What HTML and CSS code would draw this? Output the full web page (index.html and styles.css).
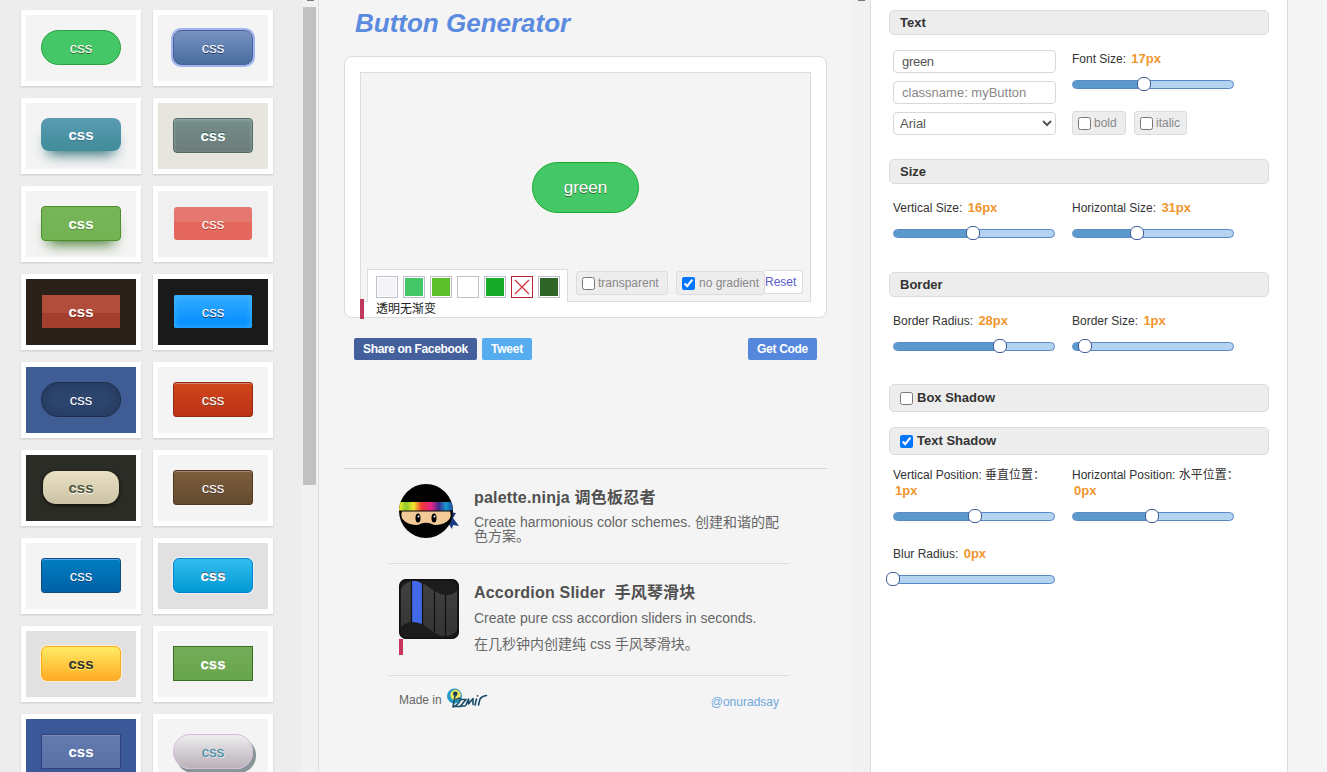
FILE: index.html
```
<!DOCTYPE html>
<html lang="zh">
<head>
<meta charset="utf-8">
<title>Button Generator</title>
<link rel="stylesheet" href="styles.css">
</head>
<body>
<aside class="gallery">
  <div class="cards">
    <div class="card"><div class="stage"><span class="btn b-green">css</span></div></div>
    <div class="card"><div class="stage"><span class="btn b-indigo">css</span></div></div>
    <div class="card"><div class="stage"><span class="btn bold flat b-teal">css</span></div></div>
    <div class="card"><div class="stage s-stone"><span class="btn bold b-slate">css</span></div></div>
    <div class="card"><div class="stage"><span class="btn bold b-grass">css</span></div></div>
    <div class="card"><div class="stage s-pale"><span class="btn small b-coral">css</span></div></div>
    <div class="card"><div class="stage s-coffee"><span class="btn bold small b-brick">css</span></div></div>
    <div class="card"><div class="stage s-black"><span class="btn small b-azure">css</span></div></div>
    <div class="card"><div class="stage s-blue"><span class="btn b-navy">css</span></div></div>
    <div class="card"><div class="stage"><span class="btn b-orange">css</span></div></div>
    <div class="card"><div class="stage s-moss"><span class="btn bold small b-cream">css</span></div></div>
    <div class="card"><div class="stage"><span class="btn b-brown">css</span></div></div>
    <div class="card"><div class="stage"><span class="btn b-royal">css</span></div></div>
    <div class="card"><div class="stage s-grey"><span class="btn bold b-sky">css</span></div></div>
    <div class="card"><div class="stage s-grey"><span class="btn bold b-yellow">css</span></div></div>
    <div class="card"><div class="stage"><span class="btn bold b-leaf">css</span></div></div>
    <div class="card"><div class="stage s-fb"><span class="btn bold b-denim">css</span></div></div>
    <div class="card"><div class="stage"><span class="btn b-silver">css</span></div></div>
  </div>
  <div class="scroll"><div class="arrow"></div><div class="thumb"></div></div>
</aside>

<main class="center">
  <h1>Button Generator</h1>
  <section class="preview">
    <div class="canvas">
      <div class="show"><span class="result">green</span></div>
      <div class="tools">
        <div class="swatches">
          <i class="sw c1"></i><i class="sw c2"></i><i class="sw c3"></i><i class="sw c4"></i><i class="sw c5"></i>
          <svg class="sw-none" viewBox="0 0 22 22"><rect x=".5" y=".5" width="21" height="21" fill="#fff" stroke="#b8222e"/><path d="M4 4L18 18M18 4L4 18" stroke="#d03540" stroke-width="1.3"/></svg>
          <i class="sw c6"></i>
        </div>
        <label class="chip t-transparent"><input type="checkbox">transparent</label>
        <label class="chip t-gradient"><input type="checkbox" checked>no gradient</label>
        <span class="reset">Reset</span>
      </div>
    </div>
    <div class="note">透明无渐变</div>
  </section>
  <div class="share">
    <span class="pill facebook">Share on Facebook</span>
    <span class="pill tweet">Tweet</span>
    <span class="pill code">Get Code</span>
  </div>
  <footer class="foot">
    <article class="promo first">
      <svg class="ninja" viewBox="0 0 60 54">
        <defs>
          <linearGradient id="rainbow"><stop offset="0" stop-color="#f6ef1c"/><stop offset=".13" stop-color="#8cc830"/><stop offset=".27" stop-color="#f7e52a"/><stop offset=".42" stop-color="#ef3a33"/><stop offset=".6" stop-color="#e5238a"/><stop offset=".74" stop-color="#3c2b8c"/><stop offset=".87" stop-color="#159bd2"/><stop offset="1" stop-color="#234696"/></linearGradient>
          <clipPath id="head"><circle cx="27" cy="27" r="27"/></clipPath>
        </defs>
        <path d="M50 28L57 29L54 34L60 42L54 41L53 45L47 36Z" fill="#17397e"/>
        <circle cx="27" cy="27" r="27" fill="#020203"/>
        <g clip-path="url(#head)">
          <rect y="18" width="54" height="8.500" fill="url(#rainbow)"/>
          <path d="M3 27.500H51Q54 36 43 40Q35 42 33 40Q27 37.500 21 40Q19 42 11 40Q0 36 3 27.500Z" fill="#f2ca97"/>
        </g>
        <ellipse cx="19" cy="34" rx="2.500" ry="4.500"/><ellipse cx="35" cy="34" rx="2.500" ry="4.500"/>
        <circle cx="19.500" cy="32.500" r="1" fill="#fff"/><circle cx="35.500" cy="32.500" r="1" fill="#fff"/>
      </svg>
      <div class="copy">
        <h2>palette.ninja 调色板忍者</h2>
        <p>Create harmonious color schemes. 创建和谐的配色方案。</p>
      </div>
    </article>
    <article class="promo second">
      <div class="slider-logo">
        <svg viewBox="0 0 60 60">
          <defs>
            <linearGradient id="fold" x2="0" y2="1"><stop stop-color="#414141"/><stop offset="1" stop-color="#343434"/></linearGradient>
            <clipPath id="tile"><rect width="60" height="60" rx="7"/></clipPath>
          </defs>
          <g clip-path="url(#tile)">
            <rect width="60" height="60" fill="#1c1c1d"/>
            <path d="M2 10Q8 1 16 2C28 3 34 15 47 16Q54 16 58 12V51Q53 57 46 57C34 57 26 43 15 43Q7 43 2 48Z" fill="url(#fold)"/>
            <path d="M13 2Q18 1 23 5V45Q18 43 13 43Z" fill="#4169e8"/>
            <path d="M12.5 1V44M23.5 4V46M35.500 11V53M46.500 15V58" stroke="#111" stroke-width="1.200"/>
            <rect x=".75" y=".75" width="58.500" height="58.500" rx="7" fill="none" stroke="#111" stroke-width="1.500"/>
          </g>
        </svg>
        <div class="mark"></div>
      </div>
      <div class="copy">
        <h2>Accordion Slider &nbsp;手风琴滑块</h2>
        <p>Create pure css accordion sliders in seconds.</p>
        <p class="zh">在几秒钟内创建纯 css 手风琴滑块。</p>
      </div>
    </article>
    <div class="credits">
      <span class="made">Made in</span>
      <svg class="izmir" viewBox="0 0 42 22">
        <circle cx="8.500" cy="8" r="7.500" fill="#2499cc"/><circle cx="9.500" cy="7" r="5.200" fill="#eee35b"/><circle cx="9.300" cy="5.800" r="2.300" fill="#173c50"/>
        <path d="M9 8L7 19M10 12Q13 9 14.500 11Q14 15 8.500 18.500H15" fill="none" stroke="#174c68" stroke-width="1.600" stroke-linecap="round" stroke-linejoin="round"/>
        <path d="M15 11.500H20L14.500 18H19M20 17L22.500 11L22.500 16L27 10.500L27 16.500M30.500 11L29 17M32.500 17L34 11Q36 8 40.500 7.500" fill="none" stroke="#174c68" stroke-width="1.600" stroke-linecap="round" stroke-linejoin="round"/>
        <circle cx="31.500" cy="7.800" r=".9" fill="#174c68"/>
      </svg>
      <span class="author">@onuradsay</span>
    </div>
  </footer>
</main>
<div class="gutter"><div class="arrow"></div></div>

<aside class="settings">
  <h3>Text</h3>
  <div class="cols text-cols">
    <div class="fields">
      <input class="field name" type="text" value="green">
      <input class="field" type="text" placeholder="classname: myButton">
      <select class="field select"><option>Arial</option></select>
    </div>
    <div>
      <div class="control">Font Size: <b>17px</b></div>
      <div class="range"><div class="fill" style="width:71px"><i></i></div></div>
      <div class="styles">
        <label class="chip"><input type="checkbox">bold</label>
        <label class="chip"><input type="checkbox">italic</label>
      </div>
    </div>
  </div>
  <h3>Size</h3>
  <div class="cols pair">
    <div><div class="control">Vertical Size: <b>16px</b></div><div class="range"><div class="fill" style="width:79px"><i></i></div></div></div>
    <div><div class="control">Horizontal Size: <b>31px</b></div><div class="range"><div class="fill" style="width:64px"><i></i></div></div></div>
  </div>
  <h3>Border</h3>
  <div class="cols pair border-pair">
    <div><div class="control">Border Radius: <b>28px</b></div><div class="range"><div class="fill" style="width:106px"><i></i></div></div></div>
    <div><div class="control">Border Size: <b>1px</b></div><div class="range"><div class="fill" style="width:12px"><i></i></div></div></div>
  </div>
  <h3 class="toggle"><input type="checkbox">Box Shadow</h3>
  <h3 class="toggle next"><input type="checkbox" checked>Text Shadow</h3>
  <div class="cols shadow-pair">
    <div><div class="control">Vertical Position: 垂直位置：<br><b>1px</b></div><div class="range"><div class="fill" style="width:81px"><i></i></div></div></div>
    <div><div class="control">Horizontal Position: 水平位置：<br><b>0px</b></div><div class="range"><div class="fill" style="width:79px"><i></i></div></div></div>
  </div>
  <div class="cols blur">
    <div><div class="control">Blur Radius: <b>0px</b></div><div class="range"><div class="fill empty"><i></i></div></div></div>
  </div>
</aside>
</body>
</html>
```
FILE: styles.css
```
* { box-sizing: border-box; }
body {
  margin: 0; height: 772px; overflow: hidden; display: flex;
  background: #f4f4f4; color: #333;
  font: 12px/15px "Liberation Sans", "Noto Sans CJK SC", sans-serif;
}
h1, h2, h3, p { margin: 0; }

/* preset gallery */
.gallery { width: 319px; height: 772px; background: #ededed; border-right: 1px solid #dfdfdf; display: flex; overflow: hidden; }
.cards { flex: 1; padding: 10px 0 0 21px; display: grid; grid-template-columns: 120px 120px; grid-auto-rows: 76px; gap: 12px; align-content: start; }
.card { background: #fff; padding: 5px; box-shadow: 0 1px 2px rgba(0,0,0,.15); }
.stage { height: 66px; background: #f4f4f4; padding-top: 15px; display: flex; justify-content: center; align-items: flex-start; }
.s-stone { background: #e6e6df; }
.s-pale { background: #f0f0f0; }
.s-coffee { background: #2b2118; }
.s-black { background: #1a1a1b; }
.s-blue { background: #405c94; }
.s-moss { background: #2c2c27; }
.s-grey { background: #e1e1e1; }
.s-fb { background: #3b5998; }
.btn { width: 80px; height: 35px; font-size: 15px; line-height: 34px; text-align: center; color: #fff; border: 1px solid; border-radius: 3px; }
.bold { font-weight: bold; }
.flat { border: 0; height: 33px; line-height: 33px; }
.small { border: 0; width: 78px; height: 33px; line-height: 34px; margin-top: 1px; }
.b-green { background: #44c767; border-color: #2ba044; border-radius: 28px; text-shadow: 0 1px 0 #2f6627; }
.b-indigo { background: linear-gradient(#7892c2, #476e9e); border-color: #4e6096; border-radius: 8px; box-shadow: 0 0 0 2px #9fb4f2; text-shadow: 0 1px 0 #283966; }
.b-teal { background: linear-gradient(#599bb3, #408c99); border-radius: 8px; box-shadow: 0 10px 14px -7px #276873; text-shadow: 0 1px 0 #3d768a; }
.b-slate { background: linear-gradient(#768d87, #6c7c7c); border-color: #566963; border-radius: 4px; box-shadow: inset 0 1px 3px #91b8b3; text-shadow: 0 -1px 0 #2b665e; }
.b-grass { background: linear-gradient(#77b55a, #72b352); border-color: #4b8f29; border-radius: 4px; box-shadow: 0 10px 14px -7px #3e7327; text-shadow: 0 1px 0 #5b8a3c; }
.b-coral { background: linear-gradient(#e4776f 45%, #e4685d 45%); text-shadow: 0 1px 0 #b23e35; }
.b-brick { background: linear-gradient(#b34d3b 55%, #a43f30 55%); border-radius: 0; text-shadow: 0 1px 0 #7a2a1d; }
.b-azure { background: linear-gradient(#33acff, #008bff); border-radius: 2px; box-shadow: inset 0 0 7px #43b8ff; text-shadow: 0 1px 0 #263666; }
.b-navy { background: #2e466e; border-color: #1f2f47; border-radius: 17px; box-shadow: inset 0 0 13px 2px #23395e; text-shadow: 0 1px 0 #263666; }
.b-orange { background: linear-gradient(#d0451b, #bc3315); border-color: #942911; box-shadow: inset 0 1px 0 #cf866c; text-shadow: 0 1px 0 #854629; }
.b-cream { width: 76px; background: linear-gradient(#eae0c2, #ccc2a6); border-radius: 13px; color: #505739; box-shadow: 0 1px 3px 1px #17170f; text-shadow: 0 1px 0 #fff; }
.b-brown { background: linear-gradient(#7d5d3b, #634b30); border-color: #54381e; box-shadow: inset 0 1px 0 #a6827e; text-shadow: 0 1px 0 #4d3534; }
.b-royal { background: linear-gradient(#007dc1, #0061a7); border-color: #124d77; box-shadow: inset 0 1px 0 #54a3f7; text-shadow: 0 1px 0 #154682; }
.b-sky { background: linear-gradient(#33bdef, #019ad2); border-color: #057fd0; border-radius: 6px; text-shadow: 0 -1px 0 #5b6178; box-shadow: 0 0 0 1px #edf3f5; }
.b-yellow { background: linear-gradient(#ffec64, #ffab23); border-color: #ffaa22; border-radius: 6px; color: #333; text-shadow: 0 1px 0 #ffee66; box-shadow: 0 0 0 1px #fff0cb; }
.b-leaf { background: linear-gradient(#74ad5a, #68a54b); border-color: #3b6e22; border-radius: 0; text-shadow: 0 1px 0 #92b879; }
.b-denim { background: linear-gradient(#637aad, #5972a7); border-color: #314179; border-radius: 0; box-shadow: inset 0 1px 0 #7a8eb9; }
.b-silver { background: linear-gradient(#ededed, #bab1ba); border-color: #d6bcd6; border-radius: 17px; color: #3a8a9e; box-shadow: 3px 4px 0 #899599; text-shadow: 1px 1px 0 #e1e2ed; }
.scroll { width: 16px; background: #f1f1f1; display: flex; flex-direction: column; align-items: center; }
.arrow { width: 7px; height: 1px; background: #777; }
.thumb { margin: 6px 1px 0 0; width: 13px; height: 478px; background: #c1c1c1; }

/* center */
.center { width: 534px; padding: 7px 26px 0 25px; }
h1 { margin-left: 11px; height: 49px; font-size: 26px; font-style: italic; line-height: 32px; color: #5b8be0; }
.preview { width: 483px; height: 262px; border: 1px solid #dcdcdc; border-radius: 8px; background: #fff; padding: 15px 15px 0; }
.canvas { height: 230px; border: 1px solid #dcdcdc; background: #f4f4f4; display: flex; flex-direction: column; }
.show { flex: none; height: 196px; padding: 89px 0 0 171px; }
.result { display: block; width: 107px; height: 51px; border: 1px solid #18ab29; border-radius: 28px; background: #44c767; color: #fff; font-size: 17px; line-height: 49px; text-align: center; text-shadow: 0 1px 0 #2f6627; }
.tools { flex: none; height: 33px; padding-left: 6px; display: flex; align-items: flex-start; color: #888; }
.swatches { width: 201px; height: 33px; background: #fff; border: 1px solid #dcdcdc; border-bottom: 0; padding: 6px 0 0 8px; display: flex; gap: 5px; }
.sw { width: 22px; height: 22px; border: 1px solid #c0c0cc; box-shadow: inset 0 0 0 1px #fff; }
.sw-none { width: 22px; height: 22px; }
.c1 { background: #f4f4f8; } .c2 { background: #44c767; } .c3 { background: #5cbf2a; } .c4 { background: #fff; } .c5 { background: #18ab29; } .c6 { background: #2f6627; }
.chip { height: 24px; border: 1px solid #dcdcdc; border-radius: 3px; background: #ededed; padding-left: 5px; display: flex; align-items: center; gap: 3px; line-height: 22px; color: #888; white-space: nowrap; }
.chip input { margin: 1px 0 0; width: 13px; height: 13px; }
.t-transparent { width: 92px; margin: 2px 0 0 8px; }
.t-gradient { width: 89px; margin: 2px 0 0 8px; }
.t-gradient input { margin-right: 1px; }
.reset { width: 38px; height: 24px; margin-top: 1px; background: #fff; border: 1px solid #dcdcdc; border-left: 0; border-radius: 0 3px 3px 0; line-height: 22px; color: #5a5ccc; }
.note { width: 96px; height: 20px; margin-top: -3px; border-left: 4px solid #c0395c; padding: 3px 0 0 12px; color: #222; line-height: 14px; position: relative; }
.share { height: 22px; margin: 20px 10px 0; display: flex; gap: 5px; }
.pill { height: 22px; border-radius: 2px; padding: 0 9px; font-weight: bold; line-height: 22px; color: #fff; white-space: nowrap; }
.facebook { width: 123px; background: #43609c; letter-spacing: -.35px; }
.tweet { width: 50px; background: #55acee; letter-spacing: -.2px; }
.code { width: 69px; margin-left: auto; background: #5587dc; letter-spacing: -.3px; }
.foot { width: 483px; height: 250px; margin-top: 108px; border-top: 1px solid #d8d8d8; padding: 0 38px 0 45px; }
.promo { padding: 15px 0 0 10px; display: flex; gap: 15px; border-bottom: 1px solid #dcdcdc; color: #666; }
.first { height: 95px; }
.second { height: 112px; }
.ninja { width: 60px; height: 54px; flex: none; }
.slider-logo { width: 60px; flex: none; }
.slider-logo svg { display: block; width: 60px; height: 60px; }
.mark { width: 4px; height: 16px; background: #c9365c; }
h2 { height: 31px; font-size: 16px; line-height: 28px; letter-spacing: .2px; color: #505050; white-space: nowrap; }
.copy { width: 316px; }
.copy p { font-size: 14px; line-height: 14px; }
.second .copy p { line-height: 16px; }
.second .copy .zh { margin-top: 10px; }
.credits { height: 40px; padding: 12px 10px 0; display: flex; color: #666; }
.made { width: 47px; padding-top: 5px; }
.izmir { width: 42px; height: 22px; }
.author { margin: 7px 0 0 auto; color: #70a7df; }

/* settings */
.gutter { width: 17px; background: #f1f1f1; display: flex; justify-content: center; }
.settings { width: 418px; height: 772px; background: #fff; border: solid #dcdcdc; border-width: 0 1px; padding: 10px 18px 0; }
h3 { height: 25px; border: 1px solid #dcdcdc; border-radius: 5px; background: #ededed; padding-left: 10px; font-size: 13px; line-height: 23px; color: #333; }
.toggle { height: 28px; display: flex; align-items: center; gap: 4px; line-height: 26px; padding-bottom: 1px; }
.toggle input { margin: 2px 0 0; width: 13px; height: 13px; }
.next { margin-top: 15px; }
.cols { padding-left: 4px; display: grid; grid-template-columns: 163px 162px; column-gap: 16px; align-items: start; }
.text-cols { height: 124px; padding-top: 15px; }
.fields { display: flex; flex-direction: column; gap: 8px; }
.field { width: 163px; height: 23px; border: 1px solid #d8d8d8; border-radius: 4px; background: #fff; padding: 0 8px; font: 13px "Liberation Sans", sans-serif; color: #555; }
.field::placeholder { color: #888; }
.name { letter-spacing: -.3px; }
.select { padding: 0 2px; }
.control { height: 30px; line-height: 15px; color: #333; padding-top: 1px; white-space: nowrap; }
.control b { margin-left: 2px; font-size: 13px; color: #f0952e; }
.range { width: 162px; height: 9px; border: 1px solid #5a87c5; border-radius: 5px; background: #b3d3f0; }
.fill { position: relative; height: 7px; background: #5b98cc; border-radius: 4px 0 0 4px; }
.empty { width: 0; left: -1px; }
.fill i { position: absolute; right: -7px; top: -4px; width: 14px; height: 14px; border: 1px solid #405d9a; border-radius: 6px; background: #fff; }
.styles { display: flex; gap: 8px; margin-top: 22px; }
.styles .chip { width: 54px; }
.styles .chip + .chip { width: 53px; }
.pair { height: 88px; padding-top: 15px; }
.border-pair { height: 87px; }
.shadow-pair { height: 90px; padding-top: 12px; }
.shadow-pair .control { height: 45px; }
.blur .control { height: 30px; }
```
